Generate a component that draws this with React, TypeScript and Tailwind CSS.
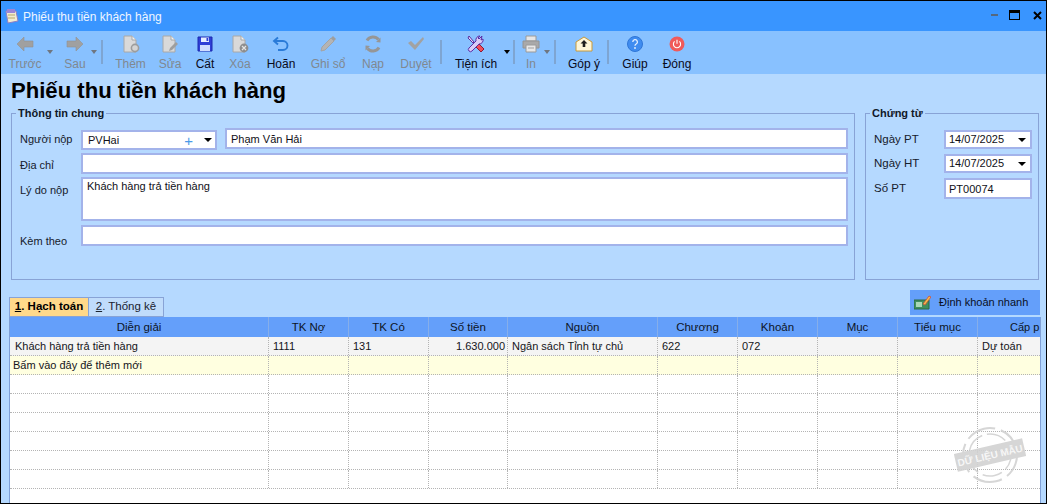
import React from "react";

const Doc = ({ children }: { children?: React.ReactNode }) => (
  <svg width="22" height="18" viewBox="0 0 22 18">
    <path d="M4 1h8l4 4v12H4z" fill="#d9d9d9" stroke="#a8a8a8" />
    <path d="M12 1v4h4" fill="#f2f2f2" stroke="#a8a8a8" />
    {children}
  </svg>
);
const icons: Record<string, React.ReactNode> = {
  back: (
    <svg width="18" height="16" viewBox="0 0 18 16"><path d="M1 8l7-7v4h9v6H8v4z" fill="#a0a0a0" stroke="#929292" strokeWidth=".6" /></svg>
  ),
  next: (
    <svg width="18" height="16" viewBox="0 0 18 16"><path d="M17 8l-7-7v4H1v6h9v4z" fill="#a0a0a0" stroke="#929292" strokeWidth=".6" /></svg>
  ),
  add: <Doc><circle cx="15" cy="13" r="3.600" fill="#d4d4d4" stroke="#9c9c9c" strokeWidth="1.600" /></Doc>,
  edit: <Doc><path d="M10 16l1-3 6-6 2 2-6 6z" fill="#9e9e9e" /></Doc>,
  save: (
    <svg width="16" height="16" viewBox="0 0 16 16">
      <path d="M1 1h14v14H1z" fill="#2f3fd6" stroke="#1d2ab0" />
      <path d="M4 1.500h8v4.500H4z" fill="#e6edff" /><path d="M9.500 2h1.800v3H9.500z" fill="#2f3fd6" />
      <path d="M3 9h10v6H3z" fill="#cfdcff" />
    </svg>
  ),
  del: <Doc><circle cx="15" cy="13" r="4.400" fill="#8e8e8e" /><path d="M13 11l4 4m0-4l-4 4" stroke="#e4e4e4" strokeWidth="1.200" /></Doc>,
  undo: (
    <svg width="18" height="16" viewBox="0 0 18 16" fill="none" stroke="#2a7bd8" strokeWidth="1.900">
      <path d="M6 1.500L2 5l4 3.500" /><path d="M2.500 5H11a4 4 0 0 1 0 9H6" />
    </svg>
  ),
  pencil: (
    <svg width="18" height="18" viewBox="0 0 18 18"><path d="M2 16l1-4 9-9 3 3-9 9z" fill="#b4b4b4" stroke="#a3a3a3" /><path d="M12 3l2-2 3 3-2 2z" fill="#9e9e9e" /></svg>
  ),
  reload: (
    <svg width="18" height="18" viewBox="0 0 18 18" fill="none" stroke="#969696" strokeWidth="3">
      <path d="M14.500 4.500A7 7 0 0 0 3 5.500" /><path d="M3.500 13.500A7 7 0 0 0 15 12.500" />
      <path d="M12 7l4.500.5V2.500zM6 11l-4.500-.5v5z" fill="#969696" stroke="none" />
    </svg>
  ),
  check: (
    <svg width="18" height="16" viewBox="0 0 18 16"><path d="M1 7l3-2 4 4 8-8 1 2-9 11z" fill="#a2a2a2" /></svg>
  ),
  tools: (
    <svg width="18" height="18" viewBox="0 0 18 18">
      <path d="M2 1l5 6-1 1-5-5z" fill="#dfd8ff" stroke="#5a2f9f" strokeWidth="1" />
      <path d="M9 9l2-1 6 6-3 3-6-6z" fill="#ef4d5a" stroke="#8e1a35" strokeWidth="1" />
      <path d="M16 1l-3 3-1-1 2-2a4 4 0 0 0-4 5L3 13a2 2 0 1 0 3 3l7-7a4 4 0 0 0 4-5l-2 1z" fill="#d8ccf8" stroke="#5b2ea6" strokeWidth="1" transform="translate(-1 0)" />
    </svg>
  ),
  print: (
    <svg width="18" height="18" viewBox="0 0 18 18">
      <path d="M4 1h10v5H4z" fill="#e6e6e6" stroke="#9a9a9a" />
      <path d="M1 6h16v7H1z" fill="#a9a9a9" stroke="#949494" />
      <path d="M4 10h10v7H4z" fill="#e8e8e8" stroke="#9a9a9a" />
      <path d="M6 13h6" stroke="#a0a0a0" />
    </svg>
  ),
  mail: (
    <svg width="18" height="16" viewBox="0 0 18 16">
      <path d="M1 6l8-5 8 5v9H1z" fill="#fdf5d8" stroke="#c89a3a" />
      <path d="M9 4l3.500 3.500H10.300V11H7.700V7.500H5.500z" fill="#1d1d1d" />
    </svg>
  ),
  help: (
    <svg width="16" height="16" viewBox="0 0 16 16">
      <circle cx="8" cy="8" r="7.500" fill="#3f8cf0" stroke="#2f76d6" />
      <path d="M5.800 6a2.300 2.300 0 1 1 3.400 2c-.8.500-1.200.9-1.200 1.800" fill="none" stroke="#e8f2ff" strokeWidth="1.300" />
      <circle cx="8" cy="12" r=".9" fill="#e8f2ff" />
    </svg>
  ),
  power: (
    <svg width="16" height="16" viewBox="0 0 16 16">
      <circle cx="8" cy="8" r="7.500" fill="#f05a5a" />
      <path d="M5.600 5.400a3.600 3.600 0 1 0 4.800 0" fill="none" stroke="#fff" strokeWidth="1.100" />
      <path d="M8 3.800v4" stroke="#fff" strokeWidth="1.100" />
    </svg>
  ),
};

const Tool = ({ icon, label, cls, off }: { icon: string; label: string; cls: string; off?: boolean }) => (
  <div className={`flex h-full shrink-0 flex-col items-center justify-start pt-[4px] ${cls}`}>
    <div className="flex h-[18px] items-center justify-center">{icons[icon]}</div>
    <div className={`mt-[3px] whitespace-nowrap text-[12px] leading-[16px] ${off ? "text-[#808890]" : "text-[#0a0a1a]"}`}>{label}</div>
  </div>
);
const Drop = ({ cls, dark }: { cls: string; dark?: boolean }) => (
  <div className={`flex h-full w-[8px] shrink-0 justify-center pt-[19px] ${cls}`}>
    <div className={`h-0 w-0 border-x-[3.500px] border-t-[4px] border-x-transparent ${dark ? "border-t-black" : "border-t-[#6f7680]"}`} />
  </div>
);
const Sep = ({ cls }: { cls: string }) => <div className={`mt-[9px] h-[24px] w-[2px] shrink-0 bg-[#7ea5d2] ${cls}`} />;
const Caret = () => <div className="h-0 w-0 border-x-[4px] border-t-[4px] border-x-transparent border-t-black" />;

const box = "border-2 border-[#a3b3ea] bg-white";
const Lbl = ({ children, cls = "" }: { children: React.ReactNode; cls?: string }) => (
  <div className={`shrink-0 leading-[15px] text-[#15202c] ${cls}`}>{children}</div>
);

const colW = ["w-[259px]", "w-[80px]", "w-[80px]", "w-[79px]", "w-[150px]", "w-[80px]", "w-[80px]", "w-[80px]", "w-[80px]", "w-[62px]"];
const heads = ["Diễn giải", "TK Nợ", "TK Có", "Số tiền", "Nguồn", "Chương", "Khoản", "Mục", "Tiểu mục", "Cấp p"];
const row1 = ["Khách hàng trả tiền hàng", "1111", "131", "1.630.000", "Ngân sách Tỉnh tự chủ", "622", "072", "", "", "Dự toán"];
const row2 = ["Bấm vào đây để thêm mới", "", "", "", "", "", "", "", "", ""];
const empty = ["", "", "", "", "", "", "", "", "", ""];

const Row = ({ cells, bg, first = "pl-[5px]" }: { cells: string[]; bg: string; first?: string }) => (
  <div className={`flex h-[19px] shrink-0 border-b border-dotted border-[#b4b4b4] ${bg}`}>
    {cells.map((c, i) => (
      <div
        key={i}
        className={`shrink-0 overflow-hidden whitespace-nowrap border-r border-dotted border-[#b4b4b4] pr-[2px] text-[11px] leading-[18px] text-[#151520] ${colW[i]} ${i === 3 ? "text-right" : i === 0 ? first : "pl-[4px]"} ${i === 9 ? "border-r-0" : ""}`}
      >
        {c}
      </div>
    ))}
  </div>
);

export default function App() {
  return (
    <div className="flex h-[504px] w-[1047px] flex-col overflow-hidden border border-black bg-[#b5d9ff] font-['Liberation_Sans',Arial,sans-serif]">
      {/* title bar */}
      <div className="flex h-[30px] shrink-0 items-center bg-[#3995ff] pl-[3px] pr-[4px]">
        <svg width="16" height="16" viewBox="0 0 16 16">
          <path d="M2 3h10l2 10-10 2z" fill="#f2ecd0" stroke="#8f7fc4" />
          <path d="M3 1h8v4H3z" fill="#9a86d8" /><path d="M4 7h7M4 10h7" stroke="#b9a86a" />
        </svg>
        <div className="ml-[3px] pt-[1px] text-[12px] text-[#eef6ff]">Phiếu thu tiền khách hàng</div>
        <div className="ml-auto flex items-center pb-[2px]">
          <div className="mr-[11px] h-[2px] w-[7px] bg-[#54687f]" />
          <div className="mr-[13px] h-[10px] w-[11px] border border-t-[3px] border-black" />
          <svg width="9" height="9" viewBox="0 0 9 9"><path d="M1 1l7 7M8 1L1 8" stroke="#000" strokeWidth="2" /></svg>
        </div>
      </div>

      {/* toolbar */}
      <div className="flex h-[43px] shrink-0 bg-[#88c1ff] pl-[3px]">
        <Tool icon="back" label="Trước" cls="w-[42px]" off />
        <Drop cls="" />
        <Tool icon="next" label="Sau" cls="ml-[6px] w-[30px]" off />
        <Drop cls="" />
        <Sep cls="ml-[3px]" />
        <Tool icon="add" label="Thêm" cls="ml-[9px] w-[37px]" off />
        <Tool icon="edit" label="Sửa" cls="w-[42px]" off />
        <Tool icon="save" label="Cất" cls="w-[28px]" />
        <Tool icon="del" label="Xóa" cls="w-[42px]" off />
        <Tool icon="undo" label="Hoãn" cls="ml-[1px] w-[38px]" />
        <Tool icon="pencil" label="Ghi sổ" cls="w-[56px]" off />
        <Tool icon="reload" label="Nạp" cls="w-[34px]" off />
        <Tool icon="check" label="Duyệt" cls="ml-[4px] w-[44px]" off />
        <Sep cls="ml-[2px]" />
        <Tool icon="tools" label="Tiện ích" cls="ml-[12px] w-[44px]" />
        <Drop cls="ml-[5px]" dark />
        <Sep cls="ml-[2px]" />
        <Tool icon="print" label="In" cls="ml-[6px] w-[20px]" off />
        <Drop cls="ml-[2px]" />
        <Sep cls="ml-[3px]" />
        <Tool icon="mail" label="Góp ý" cls="ml-[8px] w-[40px]" />
        <Sep cls="ml-[3px]" />
        <Tool icon="help" label="Giúp" cls="ml-[8px] w-[36px]" />
        <Tool icon="power" label="Đóng" cls="ml-[6px] w-[36px]" />
      </div>

      {/* heading */}
      <h1 className="ml-[10px] mt-[3px] shrink-0 text-[22.100px] font-bold leading-[28px] text-black">Phiếu thu tiền khách hàng</h1>

      {/* group boxes */}
      <div className="mt-[1px] flex h-[174px] shrink-0 pl-[10px]">
        <fieldset className="h-full w-[844px] shrink-0 border border-[#88a3d6]">
          <legend className="ml-[4px] px-[2px] text-[11px] font-bold leading-[14px] text-[#101828]">Thông tin chung</legend>
          <div className="flex flex-col pl-[8px] pr-[6px] pt-[8px] text-[11px]">
            <div className="flex items-start">
              <Lbl cls="mt-[4px] w-[61px]">Người nộp</Lbl>
              <div className={`mt-[2px] flex h-[20px] w-[136px] shrink-0 items-center pl-[5px] text-[11px] text-[#101018] ${box}`}>
                PVHai
                <span className="ml-auto text-[15px] leading-[15px] text-[#4c9be8]">+</span>
                <div className="ml-[11px] mr-[3px]"><Caret /></div>
              </div>
              <div className={`ml-[8px] h-[21px] grow pl-[4px] text-[11px] leading-[19px] text-[#101018] ${box}`}>Phạm Văn Hải</div>
            </div>
            <div className="mt-[3px] flex items-start">
              <Lbl cls="mt-[5px] w-[61px]">Địa chỉ</Lbl>
              <div className={`h-[21px] grow ${box}`} />
            </div>
            <div className="mt-[3px] flex items-start">
              <Lbl cls="mt-[6px] w-[61px]">Lý do nộp</Lbl>
              <div className={`h-[44px] grow pl-[4px] text-[11px] leading-[15px] text-[#101018] ${box}`}>Khách hàng trả tiền hàng</div>
            </div>
            <div className="mt-[4px] flex items-start">
              <Lbl cls="mt-[9px] w-[61px]">Kèm theo</Lbl>
              <div className={`h-[21px] grow ${box}`} />
            </div>
          </div>
        </fieldset>

        <fieldset className="ml-[10px] h-full w-[174px] shrink-0 border border-[#88a3d6]">
          <legend className="ml-[4px] px-[2px] text-[11px] font-bold leading-[14px] text-[#101828]">Chứng từ</legend>
          <div className="flex flex-col pl-[8px] pt-[10px] text-[11.500px]">
            {["Ngày PT", "Ngày HT"].map((l) => (
              <div key={l} className="mb-[5px] flex items-center">
                <Lbl cls="w-[70px]">{l}</Lbl>
                <div className={`flex h-[19px] w-[88px] items-center pl-[3px] text-[11px] text-[#101018] ${box}`}>
                  14/07/2025
                  <div className="ml-auto mr-[4px]"><Caret /></div>
                </div>
              </div>
            ))}
            <div className="flex items-center">
              <Lbl cls="w-[70px]">Số PT</Lbl>
              <div className={`h-[21px] w-[88px] pl-[3px] text-[11px] leading-[18px] text-[#101018] ${box}`}>PT00074</div>
            </div>
          </div>
        </fieldset>
      </div>

      {/* tabs + action */}
      <div className="mt-[8px] flex h-[29px] shrink-0 items-end pl-[8px] pr-[6px]">
        <div className="flex h-[20px] w-[80px] items-center justify-center border border-[#88a3d6] bg-[#ffd98a] text-[11.500px] font-bold text-black"><span className="underline">1</span>. Hạch toán</div>
        <div className="flex h-[20px] w-[75px] items-center justify-center border border-l-0 border-[#88a3d6] bg-[#c0dcfb] text-[11.500px] text-[#1a2330]"><span className="underline">2</span>. Thống kê</div>
        <div className="mb-[2px] ml-auto flex h-[25px] w-[130px] items-center bg-[#649ffa] pl-[4px] text-[11px] text-[#0a0f1e]">
          <svg width="17" height="15" viewBox="0 0 17 15" className="mr-[8px]">
            <path d="M0 5h15v9H0z" fill="#3f8f5e" stroke="#2b6b44" />
            <path d="M2 7h6v5H2z" fill="#a9d8b6" />
            <path d="M9 9l6-8 2 1-6 8z" fill="#f2c14a" stroke="#d04a3a" strokeWidth=".8" />
          </svg>
          Định khoản nhanh
        </div>
      </div>

      {/* grid */}
      <div className="relative ml-[8px] flex w-[1032px] grow flex-col overflow-hidden border-x border-[#7f9fd6] bg-white">
        <div className="flex h-[20px] shrink-0 bg-[#649ffa]">
          {heads.map((h, i) => (
            <div key={h} className={`shrink-0 whitespace-nowrap border-r border-[#86aeea] leading-[20px] text-[#0d1526] ${colW[i]} ${i === 9 ? "border-r-0 pl-[32px] text-left text-[11px]" : "text-center text-[11.500px]"}`}>{h}</div>
          ))}
        </div>
        <Row cells={row1} bg="bg-[#f4f4f4]" />
        <Row cells={row2} bg="bg-[#ffffe0]" first="pl-[3px]" />
        {[0, 1, 2, 3, 4, 5].map((i) => <Row key={i} cells={empty} bg="bg-white" />)}

        {/* watermark stamp */}
        <svg width="72" height="64" viewBox="0 0 72 64" className="absolute right-[14px] top-[106px] opacity-90">
          <g transform="rotate(-13 36 32)" fill="none" stroke="#d2d2d2">
            <circle cx="36" cy="32" r="27" strokeWidth="2" strokeDasharray="30 6" />
            <circle cx="36" cy="32" r="21" strokeWidth="1.500" strokeDasharray="20 5" />
            <path d="M1 23h70v18H1z" fill="#d2d2d2" stroke="none" />
            <text x="36" y="36" textAnchor="middle" fontSize="10" fontWeight="700" fill="#f6f6f6" stroke="none" fontFamily="Liberation Sans, sans-serif">DỮ LIỆU MẪU</text>
          </g>
        </svg>
      </div>
    </div>
  );
}
